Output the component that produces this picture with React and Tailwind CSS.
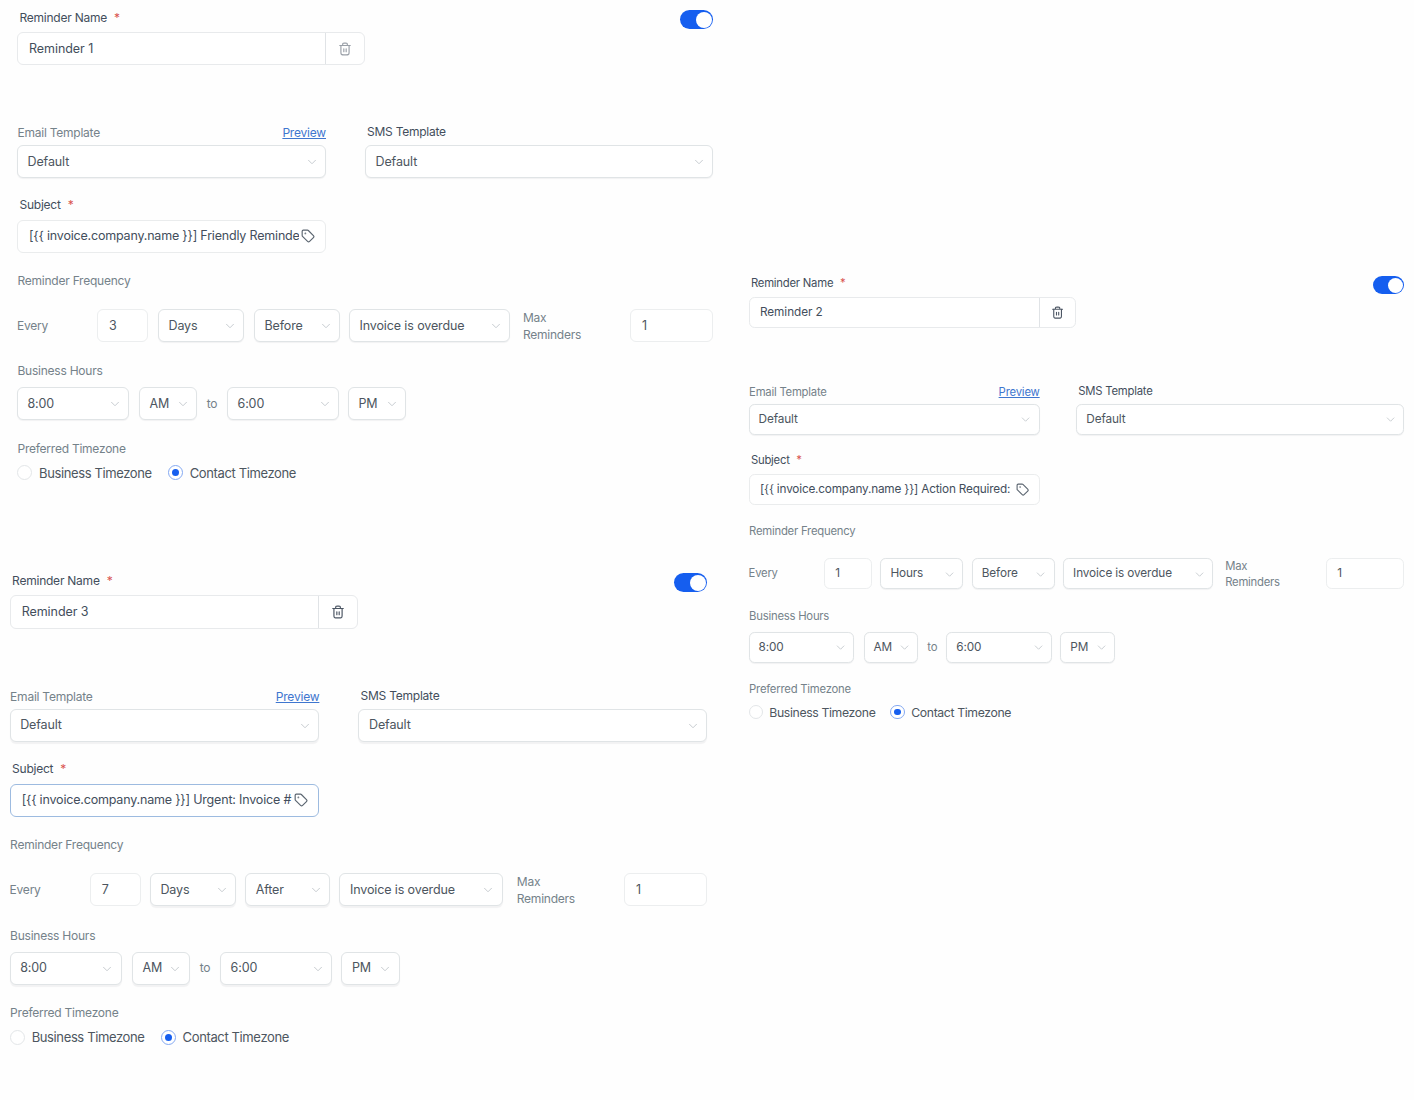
import { ChevronDown, Tag } from "lucide-react";
import clsx from "clsx";

const reminders = {
  first: {
    name: "Reminder 1",
    subject: "[{{ invoice.company.name }}] Friendly Reminde",
    every: "3",
    unit: "Days",
    when: "Before",
    trashClass: "text-[#9aa0a8]",
    unitClass: "ml-[10px] w-[86px]",
    whenClass: "ml-[10px] w-[86px]",
    eventClass: "ml-[9px] w-[161px]",
  },
  second: {
    name: "Reminder 2",
    subject: "[{{ invoice.company.name }}] Action Required:",
    every: "1",
    unit: "Hours",
    when: "Before",
    trashClass: "text-[#4b5563]",
    unitClass: "ml-[9px] w-[88px]",
    whenClass: "ml-[9px] w-[88px]",
    eventClass: "ml-[9px] w-[159px]",
  },
  third: {
    name: "Reminder 3",
    subject: "[{{ invoice.company.name }}] Urgent: Invoice #",
    every: "7",
    unit: "Days",
    when: "After",
    trashClass: "text-[#4b5563]",
    unitClass: "ml-[9px] w-[86px]",
    whenClass: "ml-[9px] w-[85px]",
    eventClass: "ml-[9px] w-[163px] mr-px",
    focused: true,
  },
};

function TrashIcon({ className }) {
  return (
    <svg
      viewBox="0 0 24 24"
      className={clsx("size-[14px]", className)}
      fill="none"
      stroke="currentColor"
      strokeWidth="2"
      strokeLinecap="round"
      strokeLinejoin="round"
    >
      <path d="M3 6h18M8 6v-.8c0-1.12 0-1.68.218-2.108a2 2 0 0 1 .874-.874C9.52 2 10.08 2 11.2 2h1.6c1.12 0 1.68 0 2.108.218a2 2 0 0 1 .874.874C16 3.52 16 4.08 16 5.2V6" />
      <path d="M19 6v11.2c0 1.68 0 2.52-.327 3.162a3 3 0 0 1-1.311 1.311C16.72 22 15.88 22 14.2 22H9.8c-1.68 0-2.52 0-3.162-.327a3 3 0 0 1-1.311-1.311C5 19.72 5 18.88 5 17.2V6" />
      <path d="M10 11.5v5M14 11.5v5" />
    </svg>
  );
}

function Label({ children, required, strong, className }) {
  return (
    <div
      className={clsx(
        "h-4 whitespace-nowrap text-[12px] leading-4 tracking-[-0.24px]",
        strong ? "text-[#434e5c]" : "text-[#75828a]",
        className,
      )}
    >
      {children}
      {required && <span className="ml-[7px] text-[#d9534f]">*</span>}
    </div>
  );
}

function Select({ value, className }) {
  return (
    <div
      className={clsx(
        "flex h-[33px] shrink-0 items-center justify-between rounded-md border border-[#e0e4e6] bg-white pt-px pr-[6.5px] pl-[9.5px] text-[12.5px] tracking-[-0.12px] text-[#4d5660] shadow-[0_1px_1px_rgba(16,24,40,0.05)]",
        className,
      )}
    >
      <span className="whitespace-nowrap">{value}</span>
      <ChevronDown size={14} strokeWidth={1.6} className="shrink-0 text-[#c3c8cd]" />
    </div>
  );
}

function NumberBox({ value, className }) {
  return (
    <div
      className={clsx(
        "flex h-[33px] shrink-0 items-center rounded-md border border-[#eceeef] bg-white pt-px pl-[11px] text-[12.5px] text-[#4d5660]",
        className,
      )}
    >
      {value}
    </div>
  );
}

function Toggle() {
  return (
    <div className="flex h-[19px] w-[33px] items-center justify-end rounded-full bg-[#155eef] pr-px">
      <div className="size-4 rounded-full bg-white" />
    </div>
  );
}

function Radio({ label, checked }) {
  return (
    <div className="flex items-center gap-[7px]">
      <div
        className={clsx(
          "flex size-[15px] items-center justify-center rounded-full border bg-white",
          checked ? "border-[#84a9f2]" : "border-[#e3e6e8]",
        )}
      >
        {checked && <div className="size-[7px] rounded-full bg-[#155eef]" />}
      </div>
      <span className="whitespace-nowrap text-[13px] leading-4 tracking-[-0.38px] text-[#4d5660]">
        {label}
      </span>
    </div>
  );
}

function ReminderForm({ reminder, className }) {
  return (
    <section className={clsx("w-[696px] pt-[10px]", className)}>
      <div className="flex h-[55px] justify-between">
        <div>
          <Label strong required className="ml-[2.5px]">
            Reminder Name
          </Label>
          <div className="mt-[6px] flex h-[33px] w-[348px] rounded-md border border-[#e8eaec] bg-white">
            <div className="flex w-[308px] items-center border-r border-[#e0e3e6] pt-px pl-[11px] text-[12.5px] tracking-[-0.06px] text-[#434e5c]">
              {reminder.name}
            </div>
            <div className="flex flex-1 items-center justify-center">
              <TrashIcon className={reminder.trashClass} />
            </div>
          </div>
        </div>
        <Toggle />
      </div>

      <div className="mt-[60px] flex justify-between">
        <div className="w-[309px]">
          <div className="flex h-5 justify-between">
            <Label className="ml-[0.5px]">Email Template</Label>
            <a className="text-[12px] leading-4 tracking-[-0.2px] text-[#3f76cf] underline">Preview</a>
          </div>
          <Select value="Default" />
        </div>
        <div className="w-[348px]">
          <Label strong className="-mt-px mb-[5px] ml-[2px]">
            SMS Template
          </Label>
          <Select value="Default" />
        </div>
      </div>

      <Label strong required className="mt-[19.4px] ml-[2.5px]">
        Subject
      </Label>
      <div
        className={clsx(
          "mt-[6.6px] flex h-[33px] w-[309px] items-center rounded-md border bg-white px-[11px]",
          reminder.focused ? "border-[#9dbbe0]" : "border-[#eaeced]",
        )}
      >
        <div className="w-[269.5px] shrink-0 overflow-hidden text-[12.5px] tracking-[-0.19px] whitespace-nowrap text-[#434e5c]">
          {reminder.subject}
        </div>
        <Tag size={14} className="ml-[2px] shrink-0 text-[#5b6570]" />
      </div>

      <Label className="mt-5 ml-[0.5px]">Reminder Frequency</Label>
      <div className="mt-[19.8px] flex items-center">
        <Label className="w-20">Every</Label>
        <NumberBox value={reminder.every} className="w-[51px]" />
        <Select value={reminder.unit} className={reminder.unitClass} />
        <Select value={reminder.when} className={reminder.whenClass} />
        <Select value="Invoice is overdue" className={reminder.eventClass} />
        <div className="ml-[13px] w-[107px] text-[12px] leading-[17px] tracking-[-0.25px] text-[#75828a]">
          Max
          <br />
          Reminders
        </div>
        <NumberBox value="1" className="w-[83px]" />
      </div>

      <Label className="mt-[20.7px] ml-[0.5px]">Business Hours</Label>
      <div className="mt-[7.8px] flex items-center">
        <Select value="8:00" className="w-[112px]" />
        <Select value="AM" className="ml-[10px] w-[58px]" />
        <Label className="w-[30px] text-center">to</Label>
        <Select value="6:00" className="w-[112px]" />
        <Select value="PM" className="ml-[9px] w-[58px]" />
      </div>

      <Label className="mt-[20.5px] ml-[0.5px]">Preferred Timezone</Label>
      <div className="mt-2 flex gap-4">
        <Radio label="Business Timezone" />
        <Radio label="Contact Timezone" checked />
      </div>
    </section>
  );
}

export default function App() {
  return (
    <main className="flex h-[1100px] w-[1414px] overflow-hidden bg-[#fefefe] font-['Inter',sans-serif]">
      <div className="w-[748.6px] shrink-0">
        <ReminderForm reminder={reminders.first} className="ml-[17px] h-[563.4px]" />
        <ReminderForm reminder={reminders.third} className="ml-[9.6px] [zoom:1.0025]" />
      </div>
      <div className="pt-[267px]">
        <ReminderForm reminder={reminders.second} className="[zoom:0.942]" />
      </div>
    </main>
  );
}
